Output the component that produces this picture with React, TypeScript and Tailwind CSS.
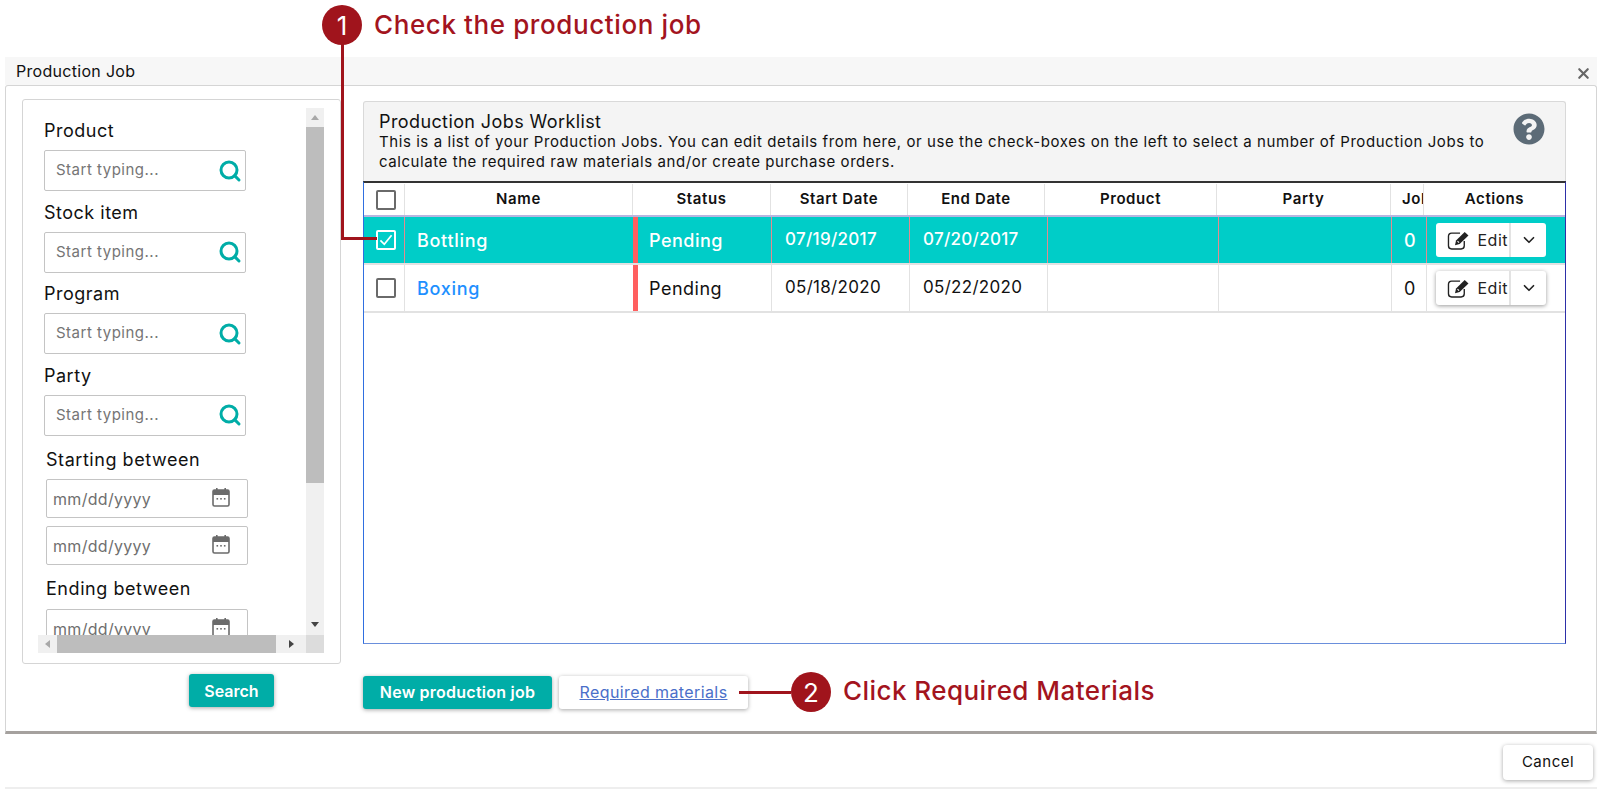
import { ChevronDown, Search, X } from 'lucide-react';
import { FaQuestionCircle } from 'react-icons/fa';

const CalendarIcon = () => (
  <svg width="18" height="20" viewBox="0 0 18 20" className="text-[#6b6b6b]">
    <rect x="1" y="3" width="16" height="16" rx="1.5" fill="none" stroke="currentColor" strokeWidth="1.6" />
    <rect x="1" y="3" width="16" height="5" fill="currentColor" />
    <rect x="4" y="1" width="1.6" height="3" fill="currentColor" />
    <rect x="12.4" y="1" width="1.6" height="3" fill="currentColor" />
    <rect x="4.5" y="11" width="1.6" height="1.6" fill="currentColor" />
    <rect x="8.2" y="11" width="1.6" height="1.6" fill="currentColor" />
    <rect x="11.9" y="11" width="1.6" height="1.6" fill="currentColor" />
  </svg>
);

// square with a solid pencil over the top right corner
const EditIcon = () => (
  <svg width="24" height="20" viewBox="0 0 22 19" fill="none">
    <path d="M12 3 H4 a3 3 0 0 0 -3 3 V15 a3 3 0 0 0 3 3 H13 a3 3 0 0 0 3 -3 V10.5" stroke="currentColor" strokeWidth="1.3" />
    <path d="M16.4 1.8 L20 5.2 L11.6 13.4 L7.2 14.6 L8.2 10 Z" fill="currentColor" />
    <path d="M9.6 10.6 L11 12" stroke="white" strokeWidth="1" />
  </svg>
);

const Checkbox = ({ checked, white }: { checked?: boolean; white?: boolean }) => (
  <span
    className={`flex h-[20px] w-[20px] items-center justify-center rounded-[2px] border-2 ${
      white ? 'border-white' : 'border-[#6a6a6a] bg-white'
    }`}
  >
    {checked && (
      <svg width="14" height="12" viewBox="0 0 16 14" fill="none">
        <path d="M1.5 7.5 L6 12 L14.5 1.5" stroke="white" strokeWidth="2" />
      </svg>
    )}
  </span>
);

const SearchField = ({ label }: { label: string }) => (
  <div className="h-[81.6px] pl-[6px]">
    <div className="text-[18px] leading-[24px] tracking-[0.5px] text-[#111]">{label}</div>
    <div className="mt-[7px] flex h-[41px] w-[202px] items-center justify-between rounded-[2px] border border-[#c4c4c4] bg-white pl-[11px] pr-[3px]">
      <span className="text-[15px] tracking-[0.5px] text-[#757575]">Start typing...</span>
      <Search size={24} strokeWidth={3} className="text-[#00ada7]" />
    </div>
  </div>
);

const DateField = () => (
  <div className="flex h-[39px] w-[202px] items-center justify-between rounded-[2px] border border-[#c4c4c4] bg-white pl-[6px] pr-[17px]">
    <span className="text-[16px] tracking-[0.3px] text-[#6f6f6f]">mm/dd/yyyy</span>
    <span className="-mt-[4px]">
      <CalendarIcon />
    </span>
  </div>
);

const headers = [
  { label: '', width: 'w-[41px] justify-center pl-[3px]' },
  { label: 'Name', width: 'w-[228px] justify-center' },
  { label: 'Status', width: 'w-[138px] justify-center' },
  { label: 'Start Date', width: 'w-[137px] justify-center' },
  { label: 'End Date', width: 'w-[137px] justify-center' },
  { label: 'Product', width: 'w-[172px] justify-center' },
  { label: 'Party', width: 'w-[174px] justify-center' },
  { label: 'Job', width: 'w-[33px] justify-start pl-[11px]' },
];

const EditButton = ({ raised }: { raised?: boolean }) => (
  <div
    className={`flex h-[34px] w-[110px] items-center rounded-[3px] bg-white font-normal text-[#222] ${
      raised ? 'shadow-[0_1px_4px_rgba(0,0,0,0.4)]' : ''
    }`}
  >
    <div className="flex h-full w-[75px] items-center justify-end gap-[6px] border-r-2 border-[#e3e3e3] pr-[1px]">
      <EditIcon />
      <span className="text-[16px] tracking-[0.5px]">Edit</span>
    </div>
    <div className="flex flex-1 items-center justify-center">
      <ChevronDown size={18} strokeWidth={2.2} />
    </div>
  </div>
);

const Row = ({
  name,
  start,
  end,
  selected,
}: {
  name: string;
  start: string;
  end: string;
  selected?: boolean;
}) => {
  const line = selected ? 'border-[#e58a8f]' : 'border-[#e2e2e2]';
  return (
    <div
      className={`flex h-[48px] border-b-2 border-[#e2e2e2] text-[18px] tracking-[0.5px] ${
        selected ? 'bg-[#00cdc8] font-medium text-white' : 'bg-white text-[#111]'
      }`}
    >
      <div className={`flex w-[41px] items-center justify-center border-r pl-[3px] ${line}`}>
        <Checkbox checked={selected} white={selected} />
      </div>
      <div className={`flex w-[228px] items-center pl-[12px] font-medium tracking-[0.7px] ${selected ? 'text-white' : 'text-[#1e90ff]'}`}>
        {name}
      </div>
      <div className={`flex w-[139px] items-center border-l-[5px] border-r border-l-[#ff5f5f] pl-[11px] ${line}`}>Pending</div>
      <div className={`flex w-[138px] items-center border-r pl-[13px] text-[17px] tracking-[0.3px] ${line}`}>{start}</div>
      <div className={`flex w-[138px] items-center border-r pl-[13px] text-[17px] tracking-[0.3px] ${line}`}>{end}</div>
      <div className={`w-[171px] border-r ${line}`} />
      <div className={`w-[173px] border-r ${line}`} />
      <div className={`flex w-[35px] items-center justify-center border-r pl-[2px] ${line}`}>0</div>
      <div className="flex flex-1 items-center pl-[9px]">
        <EditButton raised={!selected} />
      </div>
    </div>
  );
};

export default function App() {
  return (
    <div className="relative h-[789px] w-[1600px] overflow-hidden bg-white font-[Inter,sans-serif]">
      {/* Step 1 callout */}
      <div className="flex h-[57px] items-start pl-[322px] pt-[5px]">
        <span className="flex h-[40px] w-[40px] items-center justify-center rounded-full bg-[#a0141c] text-[26px] text-white">1</span>
        <span className="ml-[12px] mt-[4px] text-[26px] font-medium leading-[32px] tracking-[0.6px] text-[#a3141e]">Check the production job</span>
      </div>
      <div className="absolute left-[341px] top-[40px] z-10 h-[199px] w-[3px] bg-[#a0141c]" />
      <div className="absolute left-[341px] top-[237px] z-10 h-[3px] w-[36px] bg-[#a0141c]" />

      {/* Modal */}
      <div className="ml-[5px] mr-[3px]">
        <div className="relative flex h-[28px] items-center bg-[#f7f7f7] pb-[1px] pl-[11px] text-[16px] tracking-[0.3px] text-[#111]">
          Production Job
          <X size={17} strokeWidth={3} className="absolute right-[5px] top-[8px] text-[#666]" />
        </div>
        <div className="flex h-[649px] rounded-t-[3px] border border-b-[3px] border-[#d5d5d5] border-b-[#a5a19e] pl-[16px] pr-[30px] pt-[13px]">
          {/* Filters */}
          <div className="w-[319px] shrink-0">
            <div className="h-[565px] rounded-[3px] border border-[#d5d5d5] pb-[10px] pl-[15px] pr-[16px] pt-[8px]">
              <div className="flex h-[527px]">
                <div className="flex-1 overflow-hidden pt-[11px]">
                  <SearchField label="Product" />
                  <SearchField label="Stock item" />
                  <SearchField label="Program" />
                  <SearchField label="Party" />
                  <div className="mt-[3px] pl-[8px]">
                    <div className="text-[18px] leading-[24px] tracking-[0.55px] text-[#111]">Starting between</div>
                    <div className="mt-[7px] flex flex-col gap-[8px]">
                      <DateField />
                      <DateField />
                    </div>
                    <div className="mt-[12px] text-[18px] leading-[24px] tracking-[0.55px] text-[#111]">Ending between</div>
                    <div className="mt-[8px]">
                      <DateField />
                    </div>
                  </div>
                </div>
                <div className="flex w-[18px] flex-col bg-[#f0f0f0]">
                  <div className="flex h-[19px] items-center justify-center text-[#a8a8a8]">
                    <span className="h-0 w-0 border-x-[4px] border-b-[5px] border-x-transparent border-b-current" />
                  </div>
                  <div className="h-[356px] bg-[#bdbdbd]" />
                  <div className="flex flex-1 items-end justify-center pb-[8px] text-[#444]">
                    <span className="h-0 w-0 border-x-[4px] border-t-[5px] border-x-transparent border-t-current" />
                  </div>
                </div>
              </div>
              <div className="flex h-[18px]">
                <div className="flex flex-1 bg-[#f0f0f0]">
                  <div className="flex w-[19px] items-center justify-center text-[#a8a8a8]">
                    <span className="h-0 w-0 border-y-[4px] border-r-[5px] border-y-transparent border-r-current" />
                  </div>
                  <div className="w-[219px] bg-[#bdbdbd]" />
                  <div className="flex flex-1 items-center justify-center text-[#444]">
                    <span className="h-0 w-0 border-y-[4px] border-l-[5px] border-y-transparent border-l-current" />
                  </div>
                </div>
                <div className="w-[18px] bg-[#dcdcdc]" />
              </div>
            </div>
            <div className="mt-[10px] flex justify-end pr-[67px]">
              <button className="h-[33px] w-[85px] rounded-[3px] bg-[#00ada7] text-[16px] font-semibold text-white shadow-[0_1px_4px_rgba(0,0,0,0.35)]">
                Search
              </button>
            </div>
          </div>

          {/* Worklist */}
          <div className="ml-[22px] mt-[2px] flex-1">
            <div className="relative h-[80px] rounded-t-[3px] border border-b-0 border-[#d9d9d9] bg-[#f4f4f4] pl-[15px] pt-[9px] text-[#111]">
              <div className="text-[18px] leading-[21px] tracking-[0.4px]">Production Jobs Worklist</div>
              <p className="w-[1112px] text-[15px] leading-[19.5px] tracking-[0.57px]">
                This is a list of your Production Jobs. You can edit details from here, or use the check-boxes on the left to select a number of Production Jobs to calculate the required raw materials and/or create purchase orders.
              </p>
              <FaQuestionCircle size={32} className="absolute right-[20px] top-[11px] text-[#5c6b77]" />
            </div>
            <div className="h-[463px] border border-t-2 border-[#2d2fa8] border-b-[#6a8fdc] border-l-[#2f6fe0] border-t-[#333]">
              <div className="flex h-[34px] border-b-2 border-[#b9b5e0] pt-[1px] text-[15px] font-semibold tracking-[0.6px] text-[#111]">
                {headers.map((h, i) => (
                  <div key={i} className={`${h.width} flex items-center overflow-hidden whitespace-nowrap border-r border-[#e2e2e2]`}>
                    {i === 0 ? <Checkbox /> : h.label}
                  </div>
                ))}
                <div className="flex flex-1 items-center justify-center">Actions</div>
              </div>
              <Row name="Bottling" start="07/19/2017" end="07/20/2017" selected />
              <Row name="Boxing" start="05/18/2020" end="05/22/2020" />
            </div>

            {/* Step 2 callout */}
            <div className="mt-[28px] flex items-center">
              <button className="h-[33px] w-[189px] rounded-[3px] bg-[#00ada7] text-[16px] font-semibold tracking-[0.25px] text-white shadow-[0_1px_4px_rgba(0,0,0,0.35)]">
                New production job
              </button>
              <button className="ml-[7px] h-[33px] w-[189px] rounded-[3px] bg-white text-[16px] tracking-[0.4px] text-[#4a6fc9] underline shadow-[0_1px_4px_rgba(0,0,0,0.35)]">
                Required materials
              </button>
              <span className="-ml-[9px] h-[3px] w-[52px] bg-[#a0141c]" />
              <span className="flex h-[40px] w-[40px] items-center justify-center rounded-full bg-[#a0141c] text-[26px] text-white">2</span>
              <span className="-mt-[3px] ml-[12px] text-[26px] font-medium tracking-[0.45px] text-[#a3141e]">Click Required Materials</span>
            </div>
          </div>
        </div>

        {/* Footer */}
        <div className="flex h-[55px] items-start justify-end border-b-2 border-[#eeeeee] pr-[4px] pt-[11px]">
          <button className="h-[35px] w-[90px] rounded-[4px] bg-white text-[15px] tracking-[0.5px] text-[#111] shadow-[0_1px_4px_rgba(0,0,0,0.35)]">
            Cancel
          </button>
        </div>
      </div>
    </div>
  );
}
